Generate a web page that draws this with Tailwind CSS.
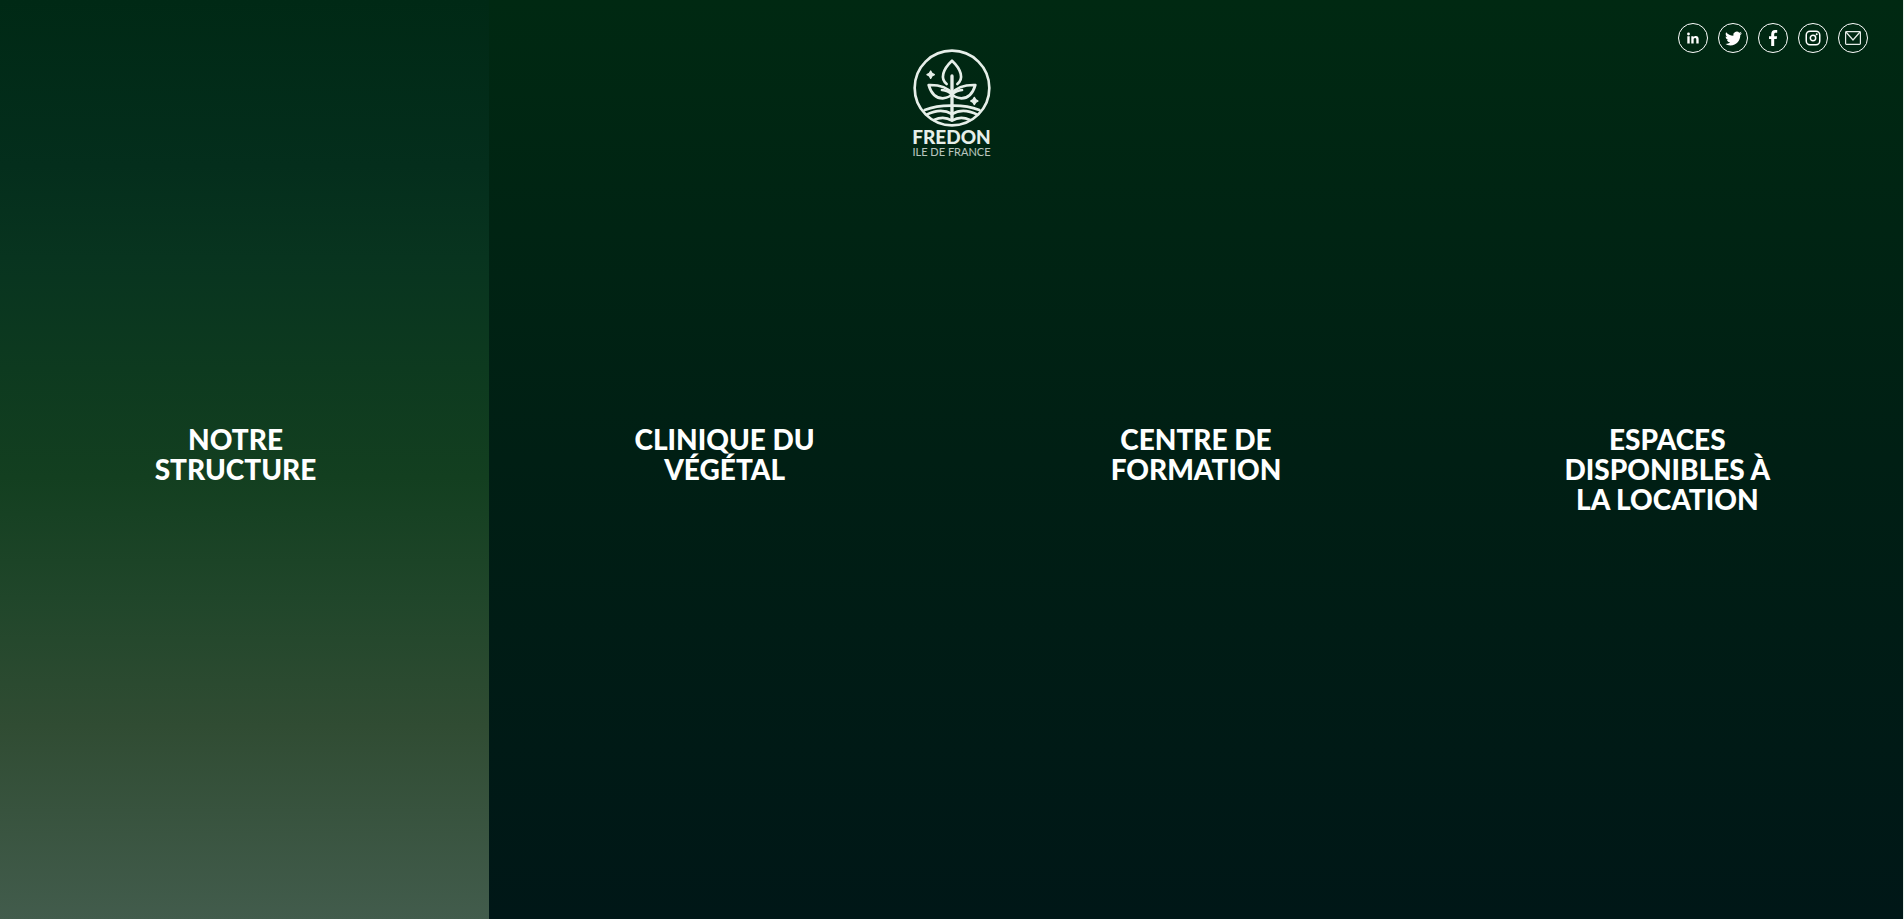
<!DOCTYPE html>
<html lang="fr">
<head>
<meta charset="utf-8">
<meta name="viewport" content="width=device-width, initial-scale=1">
<title>FREDON Ile de France</title>
<script src="https://cdn.jsdelivr.net/npm/@tailwindcss/browser@4"></script>
</head>
<body class="bg-[#001717]">
<div class="relative flex min-h-screen flex-col border-r border-[#e8f0ec] bg-linear-[180deg,#002912_0%,#001f14_50%,#001717_100%] font-['Lato',sans-serif] text-white">

  <main class="flex grow">
    <a href="#structure" class="flex w-[489px] shrink-0 justify-center bg-linear-[180deg,#002915_0%,#042e1c_18%,#08341f_28%,#0d3a1f_40%,#133f20_52%,#20462a_65%,#304c33_79%,#425c4c_100%] pt-[424px] pr-[18px] text-center text-[28px] leading-[30px] font-black">
      <h2 class="w-[220px]">NOTRE STRUCTURE</h2>
    </a>
    <a href="#clinique" class="flex flex-1 justify-center pt-[424px] text-center text-[28px] leading-[30px] font-black">
      <h2 class="w-[220px]">CLINIQUE DU VÉGÉTAL</h2>
    </a>
    <a href="#formation" class="flex flex-1 justify-center pt-[424px] text-center text-[28px] leading-[30px] font-black">
      <h2 class="w-[220px]">CENTRE DE FORMATION</h2>
    </a>
    <a href="#location" class="flex flex-1 justify-center pt-[424px] text-center text-[28px] leading-[30px] font-black">
      <h2 class="w-[220px]">ESPACES DISPONIBLES À LA LOCATION</h2>
    </a>
  </main>

  <header class="pointer-events-none absolute inset-x-0 top-0">
    <a href="#accueil" class="pointer-events-auto mx-auto mt-12 flex w-24 flex-col items-center text-[#e6efe9]">
      <svg class="size-20" viewBox="0 0 240 240" fill="none" stroke="currentColor" stroke-width="8" stroke-linecap="round" stroke-linejoin="round" aria-hidden="true">
        <circle cx="120" cy="120" r="112"/>
        <path d="M120 84V214" stroke-width="10"/>
        <path d="M104 108C84 92 92 64 120 38C148 64 156 92 136 108"/>
        <path d="M120 136C108 120 84 110 50 111C58 138 70 151 92 151C108 149 118 142 120 136C122 142 132 149 148 151C170 151 182 138 190 111C156 110 132 120 120 136"/>
        <path d="M90 126C102 127 112 132 120 140C128 132 138 127 150 126"/>
        <path d="M38 186C75 172 100 173 120 173C140 173 165 172 202 186"/>
        <path d="M44 200C75 184 100 186 120 198C140 186 165 184 196 200"/>
        <path d="M66 216C90 205 107 210 120 218C133 210 150 205 174 216"/>
        <g fill="currentColor" stroke-width="4">
          <path d="M56 69L60 76L67 80L60 84L56 91L52 84L45 80L52 76Z"/>
          <path d="M187 148L191 155L198 159L191 163L187 170L183 163L176 159L183 155Z"/>
        </g>
      </svg>
      <span class="text-[19px] leading-[18px] font-black">FREDON</span>
      <span class="text-[11px] leading-3 whitespace-nowrap opacity-80">ILE DE FRANCE</span>
    </a>
    <nav aria-label="Réseaux sociaux" class="pointer-events-auto absolute top-[23px] right-[35px] flex gap-2.5">
      <a href="#linkedin" aria-label="LinkedIn" class="flex size-[30px] items-center justify-center rounded-full border border-white">
        <svg class="size-3" viewBox="0 0 24 24" fill="currentColor" aria-hidden="true"><circle cx="3" cy="4" r="2.8"/><path d="M.6 8.4H5.400V23H.6ZM8.600 8.400H13.100V10.400C14.300 8.500 16 8 17.700 8C22 8 23.300 10.800 23.300 14.700V23H18.600V15.600C18.600 13.500 18.200 12 16.200 12C14 12 13.300 13.500 13.300 15.600V23H8.600Z"/></svg>
      </a>
      <a href="#twitter" aria-label="Twitter" class="flex size-[30px] items-center justify-center rounded-full border border-white">
        <svg class="size-[17px]" viewBox="0 0 24 24" fill="currentColor" aria-hidden="true"><path d="M23.950 4.570a10 10 0 0 1-2.820.770 4.960 4.960 0 0 0 2.160-2.720c-.950.550-2 .950-3.120 1.190a4.920 4.920 0 0 0-8.380 4.480C7.690 8.090 4.070 6.130 1.640 3.160a4.820 4.820 0 0 0-.670 2.480c0 1.710.870 3.210 2.190 4.100a4.900 4.900 0 0 1-2.230-.620v.060a4.920 4.920 0 0 0 3.950 4.830 5 5 0 0 1-2.210.080 4.940 4.940 0 0 0 4.600 3.420A9.870 9.870 0 0 1 0 19.540a14 14 0 0 0 7.550 2.210c9.050 0 14-7.500 14-13.980 0-.210 0-.420-.020-.630a9.940 9.940 0 0 0 2.460-2.550Z"/></svg>
      </a>
      <a href="#facebook" aria-label="Facebook" class="flex size-[30px] items-center justify-center rounded-full border border-white">
        <svg class="size-4" viewBox="0 0 16 16" fill="currentColor" aria-hidden="true"><path d="M6.200 16V9H4V6.200H6.200V4.200C6.200 1.500 7.700 0 10.100 0H12.200V2.700H10.800C9.600 2.700 9.200 3.300 9.200 4.200V6.200H12.100L11.700 9H9.200V16Z"/></svg>
      </a>
      <a href="#instagram" aria-label="Instagram" class="flex size-[30px] items-center justify-center rounded-full border border-white">
        <svg class="size-4" viewBox="0 0 16 16" fill="none" stroke="currentColor" stroke-width="1.500" aria-hidden="true"><rect x="1.250" y="1.250" width="13.500" height="13.500" rx="3.800"/><circle cx="8" cy="8" r="2.700"/><circle cx="11.700" cy="4.300" r="1" fill="currentColor" stroke="none"/></svg>
      </a>
      <a href="#contact" aria-label="E-mail" class="flex size-[30px] items-center justify-center rounded-full border border-white">
        <svg class="size-4" viewBox="0 0 16 16" fill="none" stroke="#e6ece8" stroke-width="1.200" aria-hidden="true"><rect x=".6" y="1.600" width="14.800" height="12.800" rx=".8"/><path d="M1 2L8 10L15 2"/></svg>
      </a>
    </nav>
  </header>
</div>
</body>
</html>
